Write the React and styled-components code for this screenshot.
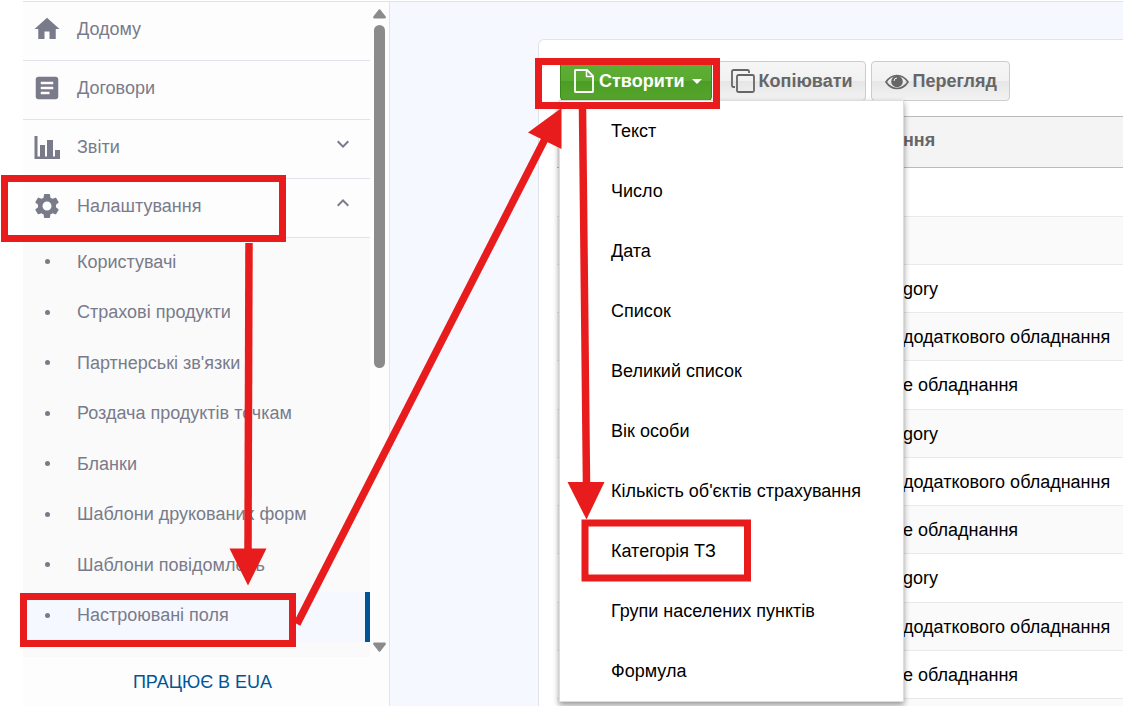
import styled, { createGlobalStyle, css } from "styled-components";
import {
  MdHome,
  MdArticle,
  MdSettings,
  MdKeyboardArrowDown,
  MdKeyboardArrowUp,
} from "react-icons/md";

const GlobalStyle = createGlobalStyle`
  * {
    box-sizing: border-box;
  }

  body {
    margin: 0;
    background: #fff;
    font-family: "Liberation Sans", Arial, sans-serif;
    font-size: 18px;
    line-height: 24px;
  }

  ul {
    list-style: none;
    margin: 0;
    padding: 0;
  }

  button {
    font: inherit;
    cursor: pointer;
  }
`;

const Page = styled.div`
  position: relative;
  display: grid;
  grid-template-columns: 367px minmax(0, 1fr);
  height: 100vh;
  padding: 1px 0 0 23px;
  overflow: hidden;
`;

/* ---------- sidebar ---------- */

const Sidebar = styled.aside`
  display: flex;
  flex-direction: column;
  min-height: 0;
  background: #fdfdfd;
  border-top: 1px solid #e1e3eb;
  border-right: 1px solid #e1e3eb;
`;

const ScrollArea = styled.div`
  display: flex;
  flex: 1;
  min-height: 0;
`;

const Nav = styled.nav`
  display: flex;
  flex-direction: column;
  flex: 1;
  overflow: hidden;
`;

const NavLink = styled.a`
  display: flex;
  align-items: center;
  flex-shrink: 0;
  gap: 15px;
  height: 59px;
  padding: 0 15px 4px 9px;
  border-bottom: 1px solid #e1e3eb;
  color: #797b8b;
  text-decoration: none;

  & > svg {
    width: 30px;
    height: 30px;
  }

  & > svg:nth-of-type(2) {
    width: 24px;
    height: 24px;
    margin: 0 0 6px auto;
  }
`;

const SubMenu = styled.ul`
  display: flex;
  flex-direction: column;
  flex: 1;
  padding-bottom: 15px;
  background: #fafafa;

  & li {
    display: flex;
    flex: 1;
  }
`;

const SubLink = styled.a`
  display: flex;
  align-items: center;
  flex: 1;
  gap: 27px;
  padding: 0 0 3px 22px;
  color: #797b8b;
  text-decoration: none;

  &::before {
    content: "";
    width: 5px;
    height: 5px;
    border-radius: 50%;
    background: #797b8b;
  }

  ${({ $active }) =>
    $active &&
    css`
      background: #f5f8ff;
      border-right: 5px solid #005599;
    `}
`;

const ScrollBar = styled.div`
  display: flex;
  flex-direction: column;
  align-items: center;
  width: 19px;
  padding: 7px 0 5px;
  color: #8b8b8b;

  & svg {
    width: 13px;
    height: 10px;
  }

  & svg:last-child {
    margin-top: auto;
  }
`;

const Thumb = styled.div`
  width: 11px;
  height: 343px;
  margin-top: 6px;
  border-radius: 6px;
  background: #8b8b8b;
`;

const SidebarFooter = styled.footer`
  display: flex;
  align-items: center;
  justify-content: center;
  height: 49px;
  padding-right: 7px;

  & a {
    color: #005599;
    text-decoration: none;
  }
`;

/* ---------- content ---------- */

const Content = styled.main`
  min-height: 0;
  padding: 37px 0 0 148px;
  background: #f5f8ff;
  border-top: 1px solid #e1e3eb;
  overflow: hidden;
`;

const Panel = styled.section`
  padding: 21px 0 0 18px;
  background: #fff;
  border: 1px solid #e1e3eb;
  border-right: 0;
  border-radius: 6px 0 0 0;
`;

const Toolbar = styled.div`
  display: flex;
  gap: 5px;
  padding: 0 0 15px 3px;
`;

const Button = styled.button`
  display: flex;
  align-items: center;
  gap: 4px;
  height: 40px;
  padding: 0 12px 0 13px;
  border: 1px solid #ccc;
  border-radius: 4px;
  background: linear-gradient(#f6f6f6, #f1f1f1 50%, #e6e6e6 50%, #f3f3f3);
  color: #666;
  font-weight: bold;
  white-space: nowrap;

  & svg {
    flex-shrink: 0;
  }

  ${({ $primary }) =>
    $primary &&
    css`
      gap: 5px;
      padding-right: 9px;
      border-color: #3b8a16;
      background: linear-gradient(#5fae35, #5aaa32 50%, #4c9d25 50%, #56a52c);
      color: #fff;
    `}
`;

const Caret = styled.span`
  margin-left: 2px;
  border: 5px solid transparent;
  border-top-color: currentColor;
  border-bottom: 0;
`;

const Dropdown = styled.div`
  position: relative;
`;

const Menu = styled.ul`
  position: absolute;
  z-index: 1;
  top: 39px;
  left: -1px;
  width: 345px;
  border: 1px solid #ddd;
  background: #fff;
  box-shadow: 0 3px 6px rgba(0, 0, 0, 0.4);
`;

const MenuItem = styled.button`
  display: block;
  width: 100%;
  height: 60px;
  padding: 0 0 0 51px;
  border: 0;
  background: none;
  color: #000;
  text-align: left;
`;

const Table = styled.table`
  width: 100%;
  border-collapse: separate;
  border-spacing: 0;
  table-layout: fixed;

  & th,
  & td {
    padding: 0;
    text-align: left;
    white-space: nowrap;
  }

  & th {
    height: 52px;
    padding-bottom: 4px;
    border: solid #bbb;
    border-width: 1px 0;
    background: #f4f4f4;
    color: #666;
  }

  & td {
    height: 48px;
    border-bottom: 1px solid #e9e9e9;
  }

  & tbody tr:nth-child(4n + 1) td {
    height: 49px;
  }

  & tbody tr:nth-child(even) {
    background: #fafafa;
  }
`;

const MarkColumn = styled.col`
  width: 346px;
`;

const Annotations = styled.svg`
  position: absolute;
  z-index: 2;
  top: 0;
  left: 0;
  pointer-events: none;
`;

const sections = [
  { title: "Додому", icon: <MdHome /> },
  { title: "Договори", icon: <MdArticle /> },
  { title: "Звіти", icon: <ChartIcon />, arrow: <MdKeyboardArrowDown /> },
  { title: "Налаштування", icon: <MdSettings />, arrow: <MdKeyboardArrowUp /> },
];

const settings = [
  "Користувачі",
  "Страхові продукти",
  "Партнерські зв'язки",
  "Роздача продуктів точкам",
  "Бланки",
  "Шаблони друкованих форм",
  "Шаблони повідомлень",
  "Настроювані поля",
];

const fieldTypes = [
  "Текст",
  "Число",
  "Дата",
  "Список",
  "Великий список",
  "Вік особи",
  "Кількість об'єктів страхування",
  "Категорія ТЗ",
  "Групи населених пунктів",
  "Формула",
];

const rows = [
  "",
  "",
  "gory",
  "додаткового обладнання",
  "е обладнання",
  "gory",
  "додаткового обладнання",
  "е обладнання",
  "gory",
  "додаткового обладнання",
  "е обладнання",
  "",
];

function ChartIcon() {
  return (
    <svg viewBox="0 0 30 30" fill="currentColor">
      <path d="M2.500 4h3v20.500H8V13h5v11.500h2V8h6v16.500h2V18h5v9H2.500z" />
    </svg>
  );
}

function PageIcon() {
  return (
    <svg width="20" height="24" viewBox="0 0 20 24" fill="none" stroke="currentColor" strokeWidth="1.800" strokeLinejoin="round">
      <path d="M1 1.500a.5.5 0 0 1 .5-.5H13l6 6v15.500a.5.5 0 0 1-.5.5h-17a.5.5 0 0 1-.5-.5z" />
      <path d="M12.500 1.500v6H19" strokeWidth="1.500" />
    </svg>
  );
}

function CopyIcon() {
  return (
    <svg width="24" height="24" viewBox="0 0 24 24" fill="none" stroke="currentColor" strokeWidth="1.800">
      <path d="M4 18H2.500A1.500 1.500 0 0 1 1 16.500v-14A1.500 1.500 0 0 1 2.500 1h14A1.500 1.500 0 0 1 18 2.500V4" />
      <rect x="6" y="6" width="17" height="17" rx="1.500" />
    </svg>
  );
}

function EyeIcon() {
  return (
    <svg width="24" height="24" viewBox="0 0 24 24" fill="none" stroke="currentColor">
      <path d="M1 13C4 8.500 8 6.500 12 6.500s8 2 11 6.500c-3 4.500-7 6.500-11 6.500S4 17.500 1 13z" strokeWidth="1.700" />
      <circle cx="12" cy="12.500" r="5.800" fill="currentColor" stroke="none" />
      <path d="M9 12a3 3 0 0 1 3-3" stroke="#f3f3f3" />
    </svg>
  );
}

function App() {
  return (
    <Page>
      <GlobalStyle />

      <Sidebar>
        <ScrollArea>
          <Nav>
            {sections.map(({ title, icon, arrow }) => (
              <NavLink href="#" key={title}>
                {icon}
                {title}
                {arrow}
              </NavLink>
            ))}
            <SubMenu>
              {settings.map((title) => (
                <li key={title}>
                  <SubLink href="#" $active={title === "Настроювані поля"}>
                    {title}
                  </SubLink>
                </li>
              ))}
            </SubMenu>
          </Nav>
          <ScrollBar aria-hidden="true">
            <svg viewBox="0 0 13 10" fill="currentColor">
              <path d="M7.200.6 12.700 7.500Q13.300 9.500 11.500 9.500h-10Q-.3 9.500.3 7.500L5.800.6q.7-.7 1.400 0z" />
            </svg>
            <Thumb />
            <svg viewBox="0 0 13 10" fill="currentColor">
              <path d="M7.200 9.400 12.700 2.500Q13.300.5 11.500.5h-10Q-.3.5.3 2.500l5.500 6.900q.7.700 1.400 0z" />
            </svg>
          </ScrollBar>
        </ScrollArea>
        <SidebarFooter>
          <a href="#">ПРАЦЮЄ В EUA</a>
        </SidebarFooter>
      </Sidebar>

      <Content>
        <Panel>
          <Toolbar>
            <Dropdown>
              <Button $primary aria-haspopup="true" aria-expanded="true">
                <PageIcon />
                Створити
                <Caret />
              </Button>
              <Menu>
                {fieldTypes.map((type) => (
                  <li key={type}>
                    <MenuItem>{type}</MenuItem>
                  </li>
                ))}
              </Menu>
            </Dropdown>
            <Button>
              <CopyIcon />
              Копіювати
            </Button>
            <Button>
              <EyeIcon />
              Перегляд
            </Button>
          </Toolbar>

          <Table>
            <colgroup>
              <MarkColumn />
              <col />
            </colgroup>
            <thead>
              <tr>
                <th />
                <th>ння</th>
              </tr>
            </thead>
            <tbody>
              {rows.map((name, i) => (
                <tr key={i}>
                  <td />
                  <td>{name}</td>
                </tr>
              ))}
            </tbody>
          </Table>
        </Panel>
      </Content>

      {/* step by step path: menu section -> page -> button -> field type */}
      <Annotations width="760" height="660" fill="none" stroke="#e81c1c">
        <g strokeWidth="7">
          <rect x="4.500" y="178.500" width="278" height="60" />
          <rect x="23.500" y="596.500" width="269" height="47" />
          <rect x="538.500" y="61.500" width="178" height="44" />
          <rect x="585" y="523" width="162.500" height="55" />
        </g>
        <g strokeWidth="7.500">
          <path d="M249 243 248 550" />
          <path d="M297 624 546 137" />
          <path d="M582.500 109 586.500 484" />
        </g>
        <g fill="#e81c1c" stroke="none">
          <path d="M229.500 548.500h37L248 585.500z" />
          <path d="M561.500 108 528 132.500 561.500 149z" />
          <path d="M567.500 482h37L586.500 519.500z" />
        </g>
      </Annotations>
    </Page>
  );
}

export default App;
